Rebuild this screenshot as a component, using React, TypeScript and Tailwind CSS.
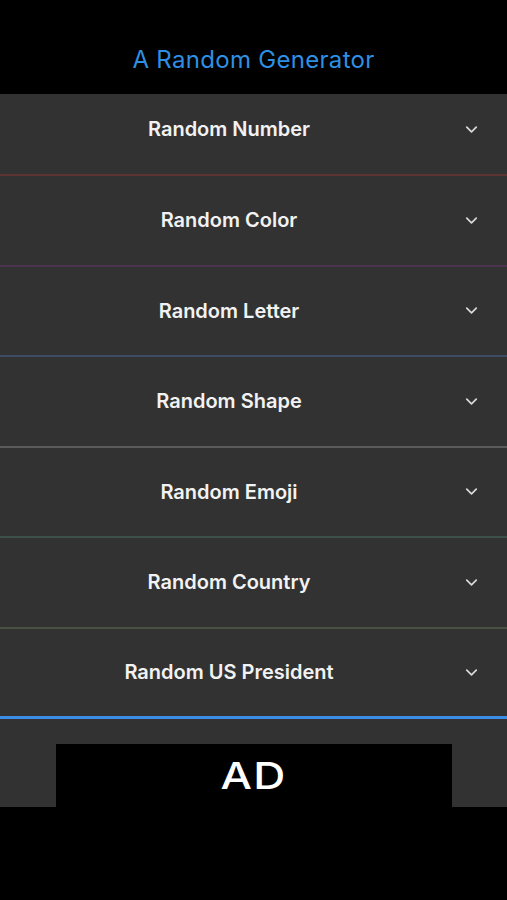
import { ChevronDown } from "lucide-react";

const rows = [
  { label: "Random Number", line: "border-[#5c3434]" },
  { label: "Random Color", line: "border-[#4b3450]" },
  { label: "Random Letter", line: "border-[#3d4e64]" },
  { label: "Random Shape", line: "border-[#5b5b5b]" },
  { label: "Random Emoji", line: "border-[#3e504a]" },
  { label: "Random Country", line: "border-[#4b5140]" },
  { label: "Random US President", line: "border-[#3a8ee6] border-b-[3px]" },
];

const App = () => {
  return (
    <div className="flex h-[900px] w-full flex-col bg-black font-['Inter',sans-serif]">
      <div className="flex h-[94px] shrink-0 justify-center pt-[46px]">
        <span className="text-[24px] leading-7 tracking-[0.3px] text-[#2f8fe3]">
          A Random Generator
        </span>
      </div>
      <div className="flex flex-col bg-[#323232]">
        {rows.map((row, i) => (
          <div
            key={row.label}
            className={`flex items-center border-b-2 ${row.line} ${i === 0 ? "h-[82px] pb-[10px]" : "h-[90.5px]"}`}
          >
            <div className="flex-1 pl-[6px] text-center text-[20px] font-semibold text-[#f2f2f2]">
              {row.label}
            </div>
            <ChevronDown className="mr-[26px] ml-[10px] h-[19px] w-[19px] text-[#d8d8d8]" strokeWidth={2.2} />
          </div>
        ))}
        <div className="flex h-[88px] justify-center pt-[25px]">
          <div className="flex w-[396px] items-center justify-center bg-black">
            <span className="scale-x-[1.2] text-[37px] font-medium leading-none tracking-[1px] text-white">
              AD
            </span>
          </div>
        </div>
      </div>
    </div>
  );
};

export default App;
